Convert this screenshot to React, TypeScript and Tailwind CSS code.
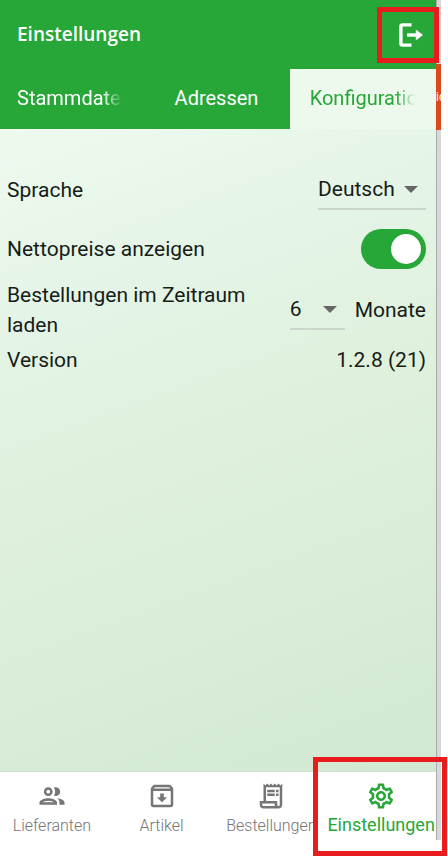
import { useState } from "react";
import type { ReactNode } from "react";
import { MdOutlineArchive, MdOutlineGroup, MdOutlineReceiptLong, MdOutlineSettings } from "react-icons/md";

const tabs = ["Stammdaten", "Adressen", "Konfiguration"];

const navItems = [
  { label: "Lieferanten", icon: MdOutlineGroup },
  { label: "Artikel", icon: MdOutlineArchive },
  { label: "Bestellungen", icon: MdOutlineReceiptLong },
  { label: "Einstellungen", icon: MdOutlineSettings },
];

const LogoutIcon = () => (
  <svg viewBox="0 0 24 24" className="w-6 h-6" fill="none" stroke="currentColor" strokeWidth="3.4" aria-hidden="true">
    <path d="M12.5 1.9H3.4Q1.9 1.9 1.9 3.4V20.6Q1.9 22.1 3.4 22.1H12.5" />
    <path d="M8 12H19" />
    <path d="M16.8 6.6L24 12L16.8 17.4Z" fill="currentColor" stroke="none" />
  </svg>
);

const SelectField = ({ id, options, className }: { id: string; options: string[]; className: string }) => (
  <div className={`relative border-b-2 border-[#ccd5cc] ${className}`}>
    <select id={id} className="w-full h-[38px] appearance-none bg-transparent outline-none">
      {options.map((option) => (
        <option key={option}>{option}</option>
      ))}
    </select>
    <svg viewBox="0 0 14 7" className="pointer-events-none absolute right-2 top-4 w-3.5 h-[7px]" fill="#666" aria-hidden="true">
      <path d="M0 0H14L7 7Z" />
    </svg>
  </div>
);

const Row = ({ label, htmlFor, children }: { label: string; htmlFor?: string; children: ReactNode }) => (
  <div className="flex items-center justify-between gap-8">
    {htmlFor ? <label htmlFor={htmlFor}>{label}</label> : <span>{label}</span>}
    <div className="flex items-center shrink-0">{children}</div>
  </div>
);

const App = () => {
  const [activeTab, setActiveTab] = useState("Konfiguration");
  const [netPrices, setNetPrices] = useState(true);

  return (
    <div className="min-h-screen flex bg-white pr-[7px] overflow-hidden font-['Roboto',sans-serif]">
      <div className="flex-1 min-w-0 flex flex-col">
        {/* Header */}
        <header className="bg-[#26a737] text-white">
          <div className="flex items-center justify-between h-[69px] pl-[17px] pr-[13px]">
            <h1 className="font-['Open_Sans',sans-serif] text-[19px] font-semibold">Einstellungen</h1>
            <button type="button" aria-label="Abmelden" className="relative">
              <LogoutIcon />
              <span className="pointer-events-none absolute z-10 -inset-y-4 -left-[22px] -right-4 border-[5px] border-[#e81c1c]"></span>
            </button>
          </div>

          {/* Tabs */}
          <div role="tablist" className="flex">
            {tabs.map((tab) => (
              <button
                key={tab}
                type="button"
                role="tab"
                aria-selected={activeTab === tab}
                onClick={() => setActiveTab(tab)}
                className={`flex-1 min-w-0 h-15 px-5 pb-0.5 text-xl first:pl-[17px] ${
                  activeTab === tab ? "bg-[#eef9ee] text-[#26a737]" : "text-white"
                }`}
              >
                <span
                  className={`block overflow-hidden whitespace-nowrap ${
                    tab === "Adressen"
                      ? "text-center"
                      : "text-left [mask-image:linear-gradient(to_right,black_80%,transparent)]"
                  }`}
                >
                  {tab}
                </span>
              </button>
            ))}
          </div>
        </header>

        {/* Settings */}
        <main className="flex-1 flex flex-col pl-[7px] pr-[10px] pt-[41px] text-[21px] leading-[30px] text-[#161c16] bg-[linear-gradient(160deg,#effaef_0%,#e4f4e7_25%,#dff1dc_48%,#d2e8d3_100%)]">
          <Row label="Sprache" htmlFor="language">
            <SelectField id="language" options={["Deutsch", "English"]} className="w-[108px]" />
          </Row>
          <div className="pt-[19px] pb-[11px]">
            <Row label="Nettopreise anzeigen" htmlFor="net-prices">
              <div className="relative flex">
                <input
                  id="net-prices"
                  type="checkbox"
                  role="switch"
                  checked={netPrices}
                  onChange={(e) => setNetPrices(e.target.checked)}
                  className="peer appearance-none w-[65px] h-10 rounded-full bg-gray-400 checked:bg-[#26a737]"
                />
                <span className="pointer-events-none absolute top-[5px] left-[5px] size-[30px] rounded-full bg-white peer-checked:left-[30px]"></span>
              </div>
            </Row>
          </div>
          <div className="mb-[5px]">
            <Row label="Bestellungen im Zeitraum laden" htmlFor="period">
              <SelectField id="period" options={["6", "12", "24"]} className="w-[55px]" />
              <span className="pl-[10px]">Monate</span>
            </Row>
          </div>
          <Row label="Version">1.2.8 (21)</Row>
        </main>

        {/* Bottom navigation */}
        <nav className="flex h-[85px] -ml-[3px] bg-white border-t border-[#cfe0cf]">
          {navItems.map(({ label, icon: Icon }) => {
            const active = label === "Einstellungen";
            return (
              <a
                key={label}
                href="#"
                className={`relative flex-1 min-w-0 flex flex-col items-center pt-[9px] whitespace-nowrap ${
                  active ? "text-[#26a737] text-lg leading-7" : "text-[#757575] text-base leading-[30px] font-light"
                }`}
              >
                <Icon className="size-[30px]" />
                <span>{label}</span>
                {active && (
                  <span className="pointer-events-none absolute z-10 -top-[15px] bottom-0 -left-[13px] -right-[11px] border-[5px] border-[#e81c1c]"></span>
                )}
              </a>
            );
          })}
        </nav>
      </div>

      {/* Neighbouring window edge */}
      <div className="w-[5px] shrink-0 flex flex-col overflow-hidden">
        <div className="h-16 bg-[#e3d3d3] border-l border-[#aaa]"></div>
        <div className="h-[66px] flex items-center bg-[#d84a1b] text-white text-xs">ic</div>
        <div className="flex-1 bg-[#d8d8d8] border-l border-[#aaa] mb-4"></div>
      </div>
    </div>
  );
};

export default App;
